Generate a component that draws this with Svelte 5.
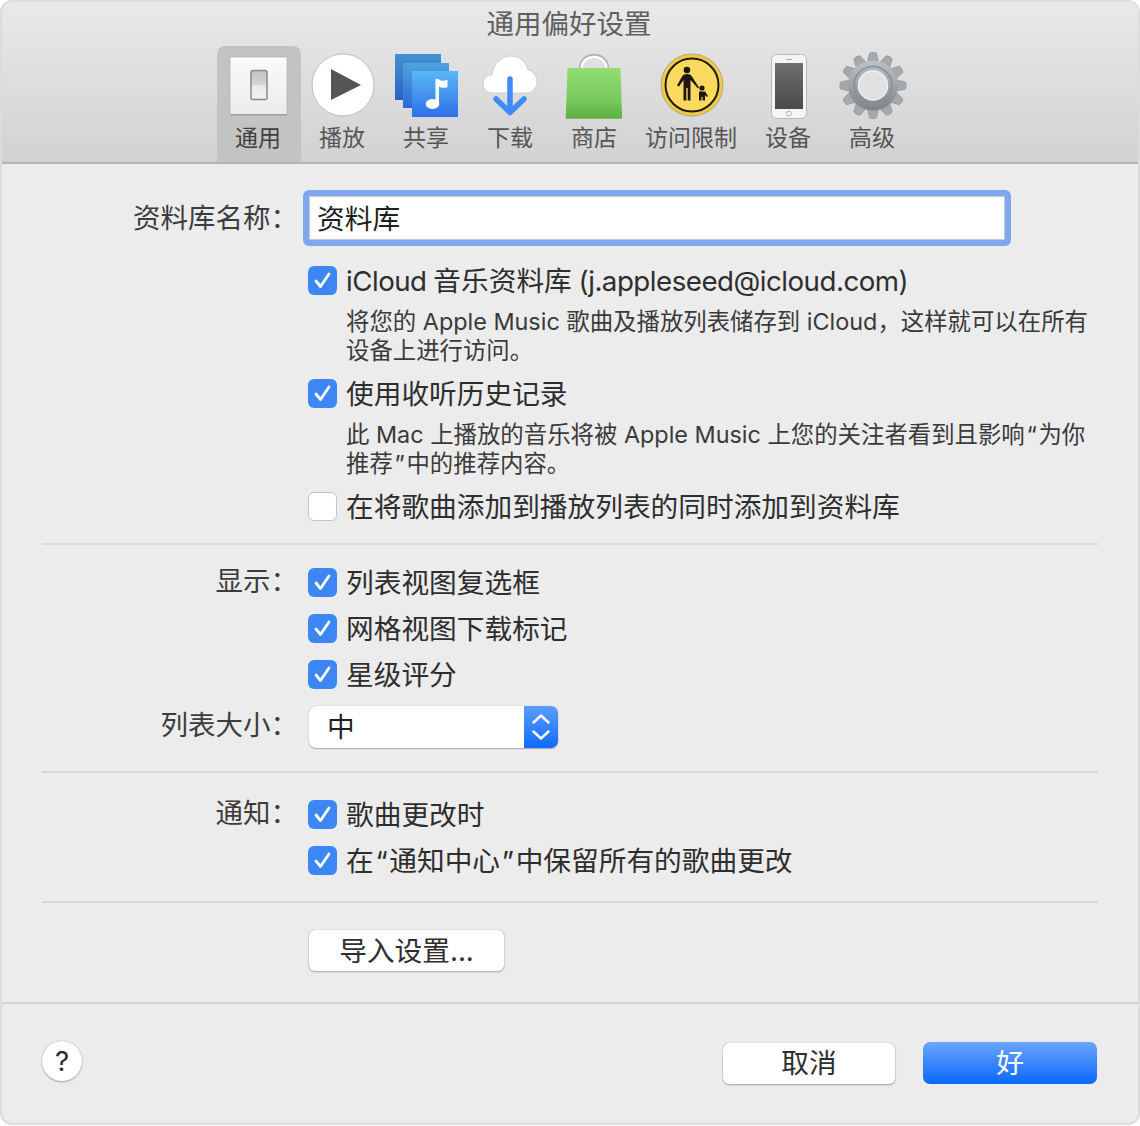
<script lang="ts">
  const gearTeeth = Array.from({ length: 12 }, (_, i) => i * 30);

  const displayOptions = ['列表视图复选框', '网格视图下载标记', '星级评分'];
</script>

{#snippet checkmark()}
  <span class="box on">
    <svg viewBox="0 0 29 29" width="29" height="29" aria-hidden="true">
      <path d="M8 15 L12.500 20.500 L21 8" fill="none" stroke="#fff" stroke-width="2.800" stroke-linecap="round" stroke-linejoin="round" />
    </svg>
  </span>
{/snippet}

<div class="window">
  <header class="titlebar">
    <div class="title">通用偏好设置</div>
    <nav class="tabs">
      <div class="tab active">
        <svg viewBox="0 0 70 70" width="70" height="70" aria-hidden="true">
          <defs>
            <linearGradient id="plate" x1="0" y1="0" x2="0" y2="1">
              <stop offset="0" stop-color="#fafafa" />
              <stop offset="1" stop-color="#ececec" />
            </linearGradient>
            <linearGradient id="rocker" x1="0" y1="0" x2="0" y2="1">
              <stop offset="0" stop-color="#c4c4c4" />
              <stop offset="0.48" stop-color="#d4d4d4" />
              <stop offset="0.52" stop-color="#e9e9e9" />
              <stop offset="1" stop-color="#f2f2f2" />
            </linearGradient>
          </defs>
          <rect x="6" y="7" width="57" height="58" rx="1.500" fill="url(#plate)" stroke="#a8a8a8" stroke-width="0.600" />
          <rect x="6" y="64" width="57" height="1.400" fill="#9c9c9c" />
          <rect x="27" y="20.500" width="16" height="29" rx="2" fill="url(#rocker)" stroke="#8a8a8a" stroke-width="1.500" />
        </svg>
        <span>通用</span>
      </div>

      <div class="tab">
        <svg viewBox="0 0 70 70" width="70" height="70" aria-hidden="true">
          <circle cx="35" cy="35" r="31" fill="#fff" stroke="#bdbdbd" stroke-width="1" />
          <path d="M23 19 L23 50 L53 35 Z" fill="#555" />
        </svg>
        <span>播放</span>
      </div>

      <div class="tab nudge">
        <svg viewBox="0 0 70 70" width="70" height="70" aria-hidden="true">
          <defs>
            <linearGradient id="s1" x1="0" y1="0" x2="0" y2="1">
              <stop offset="0" stop-color="#4591d0" />
              <stop offset="1" stop-color="#2a62c8" />
            </linearGradient>
            <linearGradient id="s2" x1="0" y1="0" x2="0" y2="1">
              <stop offset="0" stop-color="#4ea3de" />
              <stop offset="1" stop-color="#2d6ad6" />
            </linearGradient>
            <linearGradient id="s3" x1="0" y1="0" x2="0" y2="1">
              <stop offset="0" stop-color="#59b8f6" />
              <stop offset="1" stop-color="#2f6fe8" />
            </linearGradient>
          </defs>
          <rect x="4" y="4" width="46" height="46" fill="url(#s1)" />
          <rect x="12" y="13" width="46" height="45" fill="url(#s2)" />
          <rect x="21" y="21" width="46" height="46" fill="url(#s3)" />
          <ellipse cx="41.500" cy="54" rx="6.800" ry="5" fill="#fff" />
          <rect x="44.500" y="29" width="3.500" height="26" fill="#fff" />
          <path d="M47 29 C50 31.500 53 31 56.500 29.500 L56.500 37 C53 38.500 50 38 47 36 Z" fill="#fff" />
        </svg>
        <span>共享</span>
      </div>

      <div class="tab nudge">
        <svg viewBox="0 0 70 70" width="70" height="70" aria-hidden="true">
          <path d="M18 43 C11 43 8 38 8 33.500 C8 28 12 25 17 25 C18 15 26 6 36 6 C45 6 51 12 53 20 C59 21 62 27 62 32 C62 38 57 43 52 43 Z" fill="#fff" stroke="#c6c6c6" stroke-width="0.800" />
          <path d="M35 29 L35 62 M21 49 L35 62.500 L49 49" fill="none" stroke="#3f8bf8" stroke-width="5.500" stroke-linecap="round" stroke-linejoin="round" />
        </svg>
        <span>下载</span>
      </div>

      <div class="tab nudge">
        <svg viewBox="0 0 70 70" width="70" height="70" aria-hidden="true">
          <defs>
            <linearGradient id="bag" x1="0" y1="0" x2="0" y2="1">
              <stop offset="0" stop-color="#93dc71" />
              <stop offset="1" stop-color="#69bf50" />
            </linearGradient>
            <linearGradient id="fold" x1="0" y1="0" x2="0" y2="1">
              <stop offset="0" stop-color="#6fc455" />
              <stop offset="1" stop-color="#5fb046" />
            </linearGradient>
          </defs>
          <path d="M21.500 19 C21.500 11 27 5.500 35 5.500 C43 5.500 48.500 11 48.500 19" fill="none" stroke="#b5b5b5" stroke-width="3.600" />
          <path d="M22.500 19 C22.500 11.500 28 6.800 35 6.800 C42 6.800 47.500 11.500 47.500 19" fill="none" stroke="#fff" stroke-width="2.200" />
          <path d="M8.500 18 L61.500 18 L63 67 C63 68 62.400 68.500 61.500 68.500 L8 68.500 C7 68.500 6.600 68 6.700 67 Z" fill="url(#bag)" />
          <path d="M8 54 L62 54 L63 67 C63 68 62.400 68.500 61.500 68.500 L8 68.500 C7 68.500 6.600 68 6.700 67 Z" fill="url(#fold)" />
        </svg>
        <span>商店</span>
      </div>

      <div class="tab wide">
        <svg viewBox="0 0 70 70" width="70" height="70" aria-hidden="true">
          <circle cx="35" cy="35" r="31" fill="#f2cb45" stroke="#b3a67a" stroke-width="1" />
          <circle cx="35" cy="35" r="26.500" fill="#fbd95e" stroke="#1f1a10" stroke-width="2" />
          <circle cx="30" cy="20" r="3.300" fill="#1c1810" />
          <path d="M30 24 C27 24 26 25 25 26.500 L20 35.500 L22 36.500 L26.500 30 L26.500 50.500 L29.300 50.500 L29.300 38 L30.700 38 L30.700 50.500 L33.500 50.500 L33.500 30 L41 38.500 L42 37.500 L35 26.500 C34 25 33 24 30 24 Z" fill="#1c1810" />
          <circle cx="45" cy="38" r="2.600" fill="#1c1810" />
          <path d="M42 41.500 L48 41.500 L51 46 L49.800 47 L48 45 L48 50.500 L45.600 50.500 L45.600 47 L44.400 47 L44.400 50.500 L42 50.500 Z" fill="#1c1810" />
        </svg>
        <span>访问限制</span>
      </div>

      <div class="tab">
        <svg viewBox="0 0 70 70" width="70" height="70" aria-hidden="true">
          <defs>
            <linearGradient id="glass" x1="0" y1="0" x2="0" y2="1">
              <stop offset="0" stop-color="#6f6f6f" />
              <stop offset="1" stop-color="#4a4a4a" />
            </linearGradient>
          </defs>
          <rect x="17.500" y="4.500" width="35" height="64" rx="5" fill="#f5f5f5" stroke="#b9b9b9" stroke-width="1" />
          <rect x="21" y="13" width="28" height="46" fill="url(#glass)" />
          <circle cx="35" cy="63.500" r="2.400" fill="#fff" stroke="#9a9a9a" stroke-width="0.800" />
          <rect x="32" y="9" width="6" height="1" fill="#a6a6a6" />
        </svg>
        <span>设备</span>
      </div>

      <div class="tab">
        <svg viewBox="0 0 70 70" width="70" height="70" aria-hidden="true">
          <defs>
            <linearGradient id="gear" x1="0" y1="0" x2="0" y2="1">
              <stop offset="0" stop-color="#bcc3c8" />
              <stop offset="1" stop-color="#7f8386" />
            </linearGradient>
          </defs>
          <g transform="translate(35 35.500)">
            {#each gearTeeth as angle}
              <path d="M-3.500 -32.500 Q0 -34 3.500 -32.500 L6 -22 L-6 -22 Z" fill="#a4a9ad" stroke="#8d9194" stroke-width="0.600" transform="rotate({angle})" />
            {/each}
            <circle r="25" fill="url(#gear)" />
            <circle r="19" fill="none" stroke="#8b8f92" stroke-width="1.500" />
            <circle r="14.500" fill="#e1e1e1" stroke="#f1f1f1" stroke-width="1.500" />
          </g>
        </svg>
        <span>高级</span>
      </div>
    </nav>
  </header>

  <main>
    <section class="library">
      <div class="row name-row">
        <div class="label">资料库名称：</div>
        <div class="field"><div class="input">资料库</div></div>
      </div>

      <div class="row check-row first">
        <div></div>
        <div class="check">{@render checkmark()}<span class="icloud"><span class="latin">iCloud</span> 音乐资料库 <span class="latin">(j.appleseed@icloud.com)</span></span></div>
      </div>
      <p class="desc">将您的 Apple Music 歌曲及播放列表储存到 iCloud，这样就可以在所有设备上进行访问。</p>

      <div class="row check-row">
        <div></div>
        <div class="check">{@render checkmark()}<span>使用收听历史记录</span></div>
      </div>
      <p class="desc">此 Mac 上播放的音乐将被 Apple Music 上您的关注者看到且影响<span class="q">“</span>为你推荐<span class="q">”</span>中的推荐内容。</p>

      <div class="row check-row">
        <div></div>
        <div class="check"><span class="box"></span><span>在将歌曲添加到播放列表的同时添加到资料库</span></div>
      </div>
    </section>

    <section class="display">
      {#each displayOptions as option, i}
        <div class="row stack-row">
          <div class="label up">{i === 0 ? '显示：' : ''}</div>
          <div class="check">{@render checkmark()}<span>{option}</span></div>
        </div>
      {/each}
      <div class="row size-row">
        <div class="label up">列表大小：</div>
        <div class="select">
          <span class="value">中</span>
          <span class="stepper">
            <svg viewBox="0 0 34 42" width="34" height="42" aria-hidden="true">
              <path d="M9.500 16.500 L17 9.500 L24.500 16.500 M9.500 25.500 L17 32.500 L24.500 25.500" fill="none" stroke="#fff" stroke-width="2.400" stroke-linecap="round" stroke-linejoin="round" />
            </svg>
          </span>
        </div>
      </div>
    </section>

    <section class="notify">
      <div class="row stack-row">
        <div class="label up">通知：</div>
        <div class="check">{@render checkmark()}<span>歌曲更改时</span></div>
      </div>
      <div class="row stack-row">
        <div class="label up"></div>
        <div class="check">{@render checkmark()}<span>在<span class="q">“</span>通知中心<span class="q">”</span>中保留所有的歌曲更改</span></div>
      </div>
    </section>

    <section class="import">
      <button class="btn import-btn">导入设置...</button>
    </section>
  </main>

  <footer>
    <button class="help">?</button>
    <div class="actions">
      <button class="btn action">取消</button>
      <button class="action primary">好</button>
    </div>
  </footer>
</div>

<style>
  :global(body) {
    background: #fff;
  }

  .window {
    box-sizing: border-box;
    width: 1140px;
    height: 1125px;
    background: #ececec;
    border: 2px solid #dcdcdc;
    border-radius: 12px;
    overflow: hidden;
    font-family: Inter, "Noto Sans CJK SC", sans-serif;
    font-size: 27.7px;
    color: #2e2e2e;
    display: flex;
    flex-direction: column;
  }

  .titlebar {
    box-sizing: border-box;
    height: 162px;
    background: linear-gradient(#e9e9e9, #d2d2d2);
    border-bottom: 2px solid #b4b4b4;
    flex: none;
  }

  .title {
    height: 44px;
    line-height: 45px;
    text-align: center;
    color: #5f5f5f;
    font-size: 27.5px;
    padding-right: 2px;
  }

  .tabs {
    display: flex;
    padding-left: 215px;
    height: 116px;
  }

  .tab {
    box-sizing: border-box;
    width: 84px;
    height: 116px;
    padding-top: 4px;
    display: flex;
    flex-direction: column;
    align-items: center;
    font-size: 23px;
    line-height: 30px;
    color: #555;
  }

  .tab.wide {
    width: 110px;
  }

  .tab.active {
    background: #c3c3c3;
    border-radius: 8px 8px 0 0;
    color: #3f3f3f;
  }

  .tab span {
    margin-right: 2px;
  }

  .tab svg {
    display: block;
    flex: none;
    height: 70px;
    margin-bottom: 3px;
  }

  .tab.nudge svg {
    margin-right: 2px;
  }

  main {
    flex: 1;
  }

  section {
    margin: 0 40px;
    border-bottom: 2px solid #d8d8d8;
    box-sizing: border-box;
  }

  .row {
    display: grid;
    grid-template-columns: 241px 1fr;
    column-gap: 26px;
    align-items: center;
  }

  .label {
    text-align: right;
    color: #3c3c3c;
    font-size: 27.5px;
    line-height: 28px;
    white-space: nowrap;
    margin-right: -15px;
  }

  .label.up {
    position: relative;
    top: -2px;
  }

  .library {
    height: 381px;
    padding-top: 26px;
  }

  .name-row {
    column-gap: 20px;
    height: 56px;
  }

  .field {
    box-sizing: border-box;
    width: 708px;
    height: 56px;
    padding: 6px;
    background: #7da7ef;
    border-radius: 6px;
  }

  .input {
    box-sizing: border-box;
    height: 44px;
    background: #fff;
    border: 1px solid #c9c9c9;
    padding-left: 7px;
    line-height: 44px;
    color: #1f1f1f;
  }

  .check-row {
    height: 29px;
  }

  .check-row.first {
    margin-top: 20px;
  }

  .check {
    display: flex;
    align-items: center;
    gap: 9px;
    height: 29px;
    margin-left: -1px;
    line-height: 32px;
    white-space: nowrap;
  }

  .icloud {
    word-spacing: -1px;
  }

  .latin {
    letter-spacing: -0.5px;
  }

  .q {
    margin: 0 1.700px;
  }

  .box {
    box-sizing: border-box;
    flex: none;
    width: 29px;
    height: 29px;
    border-radius: 6px;
    background: #fff;
    border: 1px solid #c4c4c4;
  }

  .box.on {
    background: #3d87f5;
    border: 0;
  }

  .box svg {
    display: block;
  }

  .desc {
    margin: 12px 0 14px 304px;
    width: 748px;
    font-size: 23.4px;
    line-height: 29px;
    color: #3a3a3a;
  }

  .display {
    height: 228px;
    padding-top: 23px;
  }

  .stack-row {
    height: 29px;
    margin-bottom: 17px;
  }

  .size-row {
    height: 42px;
  }

  .select {
    box-sizing: border-box;
    width: 249px;
    height: 42px;
    background: #fff;
    border-radius: 7px;
    box-shadow: 0 0 1px #999, 0 1px 1px #b0b0b0;
    display: flex;
    justify-content: space-between;
    overflow: hidden;
  }

  .value {
    padding-left: 18px;
    line-height: 42px;
    color: #1f1f1f;
  }

  .stepper {
    width: 34px;
    height: 42px;
    background: linear-gradient(#5c9dfb, #0f6bff);
  }

  .stepper svg {
    display: block;
  }

  .notify {
    height: 130px;
    padding-top: 27px;
  }

  .import {
    height: 101px;
    margin: 0;
    padding: 27px 0 0 307px;
    border-bottom-color: #d2d2d2;
  }

  button {
    font: inherit;
    padding: 0;
    border: 0;
  }

  .btn {
    background: #fff;
    border-radius: 6px;
    color: #2e2e2e;
    box-shadow: 0 0 1px #8e8e8e, 0 1px 2px #a8a8a8;
  }

  .import-btn {
    width: 195px;
    height: 41px;
    line-height: 38px;
  }

  footer {
    display: flex;
    justify-content: space-between;
    align-items: center;
    height: 120px;
    padding: 0 41px 0 40px;
    flex: none;
    box-sizing: border-box;
  }

  .help {
    width: 40px;
    height: 40px;
    margin-bottom: 6px;
    border-radius: 50%;
    background: #fff;
    color: #2a2a2a;
    box-shadow: 0 0 1px #8e8e8e, 0 1px 2px #a8a8a8;
    line-height: 40px;
  }

  .actions {
    display: flex;
    align-items: center;
    gap: 28px;
    margin-bottom: 2px;
  }

  .action {
    width: 172px;
    height: 41px;
    line-height: 40px;
  }

  .primary {
    width: 174px;
    height: 42px;
    border-radius: 7px;
    color: #fff;
    background: linear-gradient(#6aa5fb, #0969fd);
  }
</style>
